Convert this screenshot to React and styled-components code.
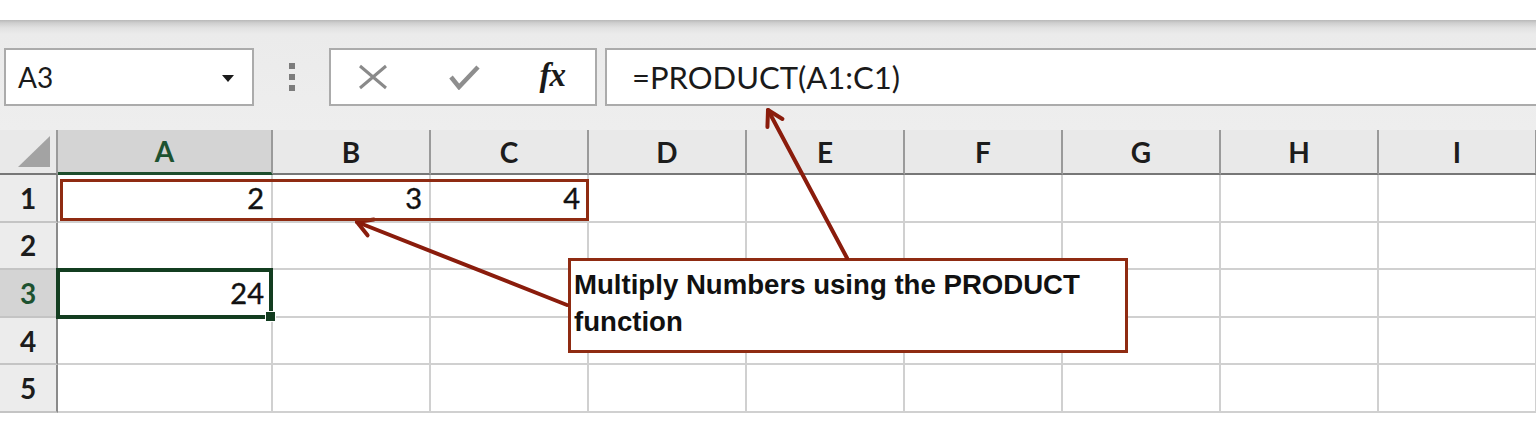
import React from "react";
import styled, { createGlobalStyle } from "styled-components";

const Global = createGlobalStyle`
  html, body {
    margin: 0;
    padding: 0;
    background: #ffffff;
  }
  * {
    box-sizing: border-box;
  }
`;

const COLUMNS = ["A", "B", "C", "D", "E", "F", "G", "H", "I"];
const ROWS = [1, 2, 3, 4, 5];
const VALUES = { A1: 2, B1: 3, C1: 4, A3: 24 };

const ARROW_COLOR = "#8a1c0c";

const Page = styled.div`
  position: relative;
  width: 1536px;
  height: 440px;
  overflow: hidden;
  background: #ffffff;
  font-family: Lato, "Liberation Sans", sans-serif;
`;

const TopGap = styled.div`
  height: 20px;
  background: #ffffff;
`;

const Toolbar = styled.div`
  height: 110px;
  display: flex;
  align-items: flex-start;
  padding: 28px 0 0 4px;
  background: linear-gradient(
    to bottom,
    #b9b9b9 0px,
    #cfcfcf 3px,
    #e2e2e2 8px,
    #ebebeb 14px,
    #eeeeee 100%
  );
`;

const Field = styled.div`
  height: 58px;
  background: #ffffff;
  border: 2px solid #ababab;
  display: flex;
  align-items: center;
`;

const NameBox = styled(Field)`
  width: 250px;
  padding: 0 18px 0 12px;
  justify-content: space-between;
  font-size: 28px;
  color: #1a1a1a;
`;

const Caret = styled.span`
  width: 0;
  height: 0;
  border-left: 6px solid transparent;
  border-right: 6px solid transparent;
  border-top: 7px solid #1a1a1a;
  margin-top: 2px;
`;

const Grip = styled.div`
  width: 75px;
  height: 58px;
  display: flex;
  flex-direction: column;
  align-items: center;
  justify-content: center;
  gap: 5px;
`;

const Dot = styled.span`
  width: 6px;
  height: 6px;
  background: #7c7c7c;
`;

const ButtonBox = styled(Field)`
  width: 268px;
  padding: 0 30px 0 26px;
  justify-content: space-between;
`;

const Fx = styled.span`
  font-family: "Liberation Serif", serif;
  font-style: italic;
  font-weight: 700;
  font-size: 33px;
  color: #1a1a1a;
  letter-spacing: -1px;
  margin-top: -4px;
`;

const FormulaBox = styled(Field)`
  flex: 1;
  margin-left: 8px;
  margin-right: -10px;
  padding-left: 25px;
  font-size: 31px;
  color: #1a1a1a;
`;

const Grid = styled.div`
  display: grid;
  grid-template-columns: 58px 215px repeat(8, 158px);
  grid-template-rows: 45px repeat(5, 47.6px);
`;

const placed = (p) => `
  grid-row: ${p.$row};
  grid-column: ${p.$col};
`;

const HeaderCell = styled.div`
  ${placed}
  display: flex;
  align-items: center;
  justify-content: center;
  font-size: 28px;
  font-weight: 700;
  color: ${(p) => (p.$active ? "#1d5230" : "#1c1c1c")};
  background: ${(p) => (p.$active ? "#d4d4d4" : "#e9e9e9")};
  border-right: 2px solid #9a9a9a;
  border-bottom: ${(p) => (p.$active ? "3px solid #1d4d2c" : "2px solid #777777")};
`;

const Corner = styled.div`
  grid-row: 1;
  grid-column: 1;
  background: #e9e9e9;
  border-right: 2px solid #9a9a9a;
  border-bottom: 2px solid #777777;
  display: flex;
  align-items: flex-end;
  justify-content: flex-end;
  padding: 0 6px 6px 0;
`;

const CornerTriangle = styled.span`
  width: 0;
  height: 0;
  border-left: 32px solid transparent;
  border-bottom: 31px solid #a3a3a3;
`;

const RowHead = styled.div`
  ${placed}
  display: flex;
  align-items: center;
  justify-content: center;
  font-size: 28px;
  font-weight: 700;
  color: ${(p) => (p.$active ? "#1d5230" : "#1c1c1c")};
  background: ${(p) => (p.$active ? "#d4d4d4" : "#ececec")};
  border-right: 2px solid #8a8a8a;
  border-bottom: 2px solid #c4c4c4;
`;

const Cell = styled.div`
  ${placed}
  display: flex;
  align-items: center;
  justify-content: flex-end;
  padding-right: 7px;
  font-size: 29px;
  color: #111111;
  -webkit-text-stroke: 0.4px #111111;
  border-right: 2px solid #d0d0d0;
  border-bottom: 2px solid #d0d0d0;
`;

const RangeMark = styled.div`
  grid-column: 2 / 5;
  grid-row: 2;
  margin: 4px 0 2px 2px;
  border: 3px solid #8f2b12;
  pointer-events: none;
  z-index: 1;
`;

const Selection = styled.div`
  grid-column: 2;
  grid-row: 4;
  margin: -2px 0 -1px -2px;
  border: 4px solid #133d20;
  position: relative;
  z-index: 1;
`;

const FillHandle = styled.span`
  position: absolute;
  right: -7px;
  bottom: -7px;
  width: 11px;
  height: 11px;
  background: #133d20;
  border: 1px solid #ffffff;
`;

const Callout = styled.div`
  position: absolute;
  left: 568px;
  top: 258px;
  width: 560px;
  height: 95px;
  background: #ffffff;
  border: 3px solid #8f2b12;
  padding: 5px 4px 0 3px;
  font-family: "Liberation Sans", Arial, sans-serif;
  font-weight: 700;
  font-size: 27.6px;
  line-height: 37px;
  color: #111111;
`;

const ArrowLayer = styled.svg`
  position: absolute;
  left: 0;
  top: 0;
  pointer-events: none;
`;

const Arrow = ({ tip, tail }) => {
  const dx = tail[0] - tip[0];
  const dy = tail[1] - tip[1];
  const len = Math.hypot(dx, dy);
  const ux = dx / len;
  const uy = dy / len;
  const c = Math.cos(Math.PI / 6);
  const s = Math.sin(Math.PI / 6);
  const head = 17;
  const a = [tip[0] + head * (ux * c - uy * s), tip[1] + head * (ux * s + uy * c)];
  const b = [tip[0] + head * (ux * c + uy * s), tip[1] + head * (-ux * s + uy * c)];
  return (
    <g stroke={ARROW_COLOR} strokeWidth="4" fill="none" strokeLinecap="round" strokeLinejoin="round">
      <line x1={tail[0]} y1={tail[1]} x2={tip[0]} y2={tip[1]} />
      <polyline points={`${a[0]},${a[1]} ${tip[0]},${tip[1]} ${b[0]},${b[1]}`} />
    </g>
  );
};

export default function App() {
  return (
    <>
      <Global />
      <Page>
        <TopGap />
        <Toolbar>
          <NameBox>
            <span>A3</span>
            <Caret />
          </NameBox>
          <Grip>
            <Dot />
            <Dot />
            <Dot />
          </Grip>
          <ButtonBox>
            <svg width="32" height="26" viewBox="0 0 32 26">
              <path d="M3 2 L29 24 M29 2 L3 24" stroke="#8a8a8a" strokeWidth="3" fill="none" />
            </svg>
            <svg width="32" height="26" viewBox="0 0 32 26">
              <path d="M3 13 L11 23 L30 3" stroke="#8e8e8e" strokeWidth="4.5" fill="none" />
            </svg>
            <Fx>fx</Fx>
          </ButtonBox>
          <FormulaBox>=PRODUCT(A1:C1)</FormulaBox>
        </Toolbar>

        <Grid>
          <Corner>
            <CornerTriangle />
          </Corner>
          {COLUMNS.map((col, ci) => (
            <HeaderCell key={col} $row={1} $col={ci + 2} $active={col === "A"}>
              {col}
            </HeaderCell>
          ))}
          {ROWS.map((row) => (
            <React.Fragment key={row}>
              <RowHead $row={row + 1} $col={1} $active={row === 3}>
                {row}
              </RowHead>
              {COLUMNS.map((col, ci) => (
                <Cell key={col} $row={row + 1} $col={ci + 2}>
                  {VALUES[col + row]}
                </Cell>
              ))}
            </React.Fragment>
          ))}
          <RangeMark />
          <Selection>
            <FillHandle />
          </Selection>
        </Grid>

        <Callout>
          Multiply Numbers using the PRODUCT
          <br />
          function
        </Callout>

        <ArrowLayer width="1536" height="440">
          <Arrow tip={[357, 222]} tail={[567, 305]} />
          <Arrow tip={[768, 110]} tail={[847, 258]} />
        </ArrowLayer>
      </Page>
    </>
  );
}
